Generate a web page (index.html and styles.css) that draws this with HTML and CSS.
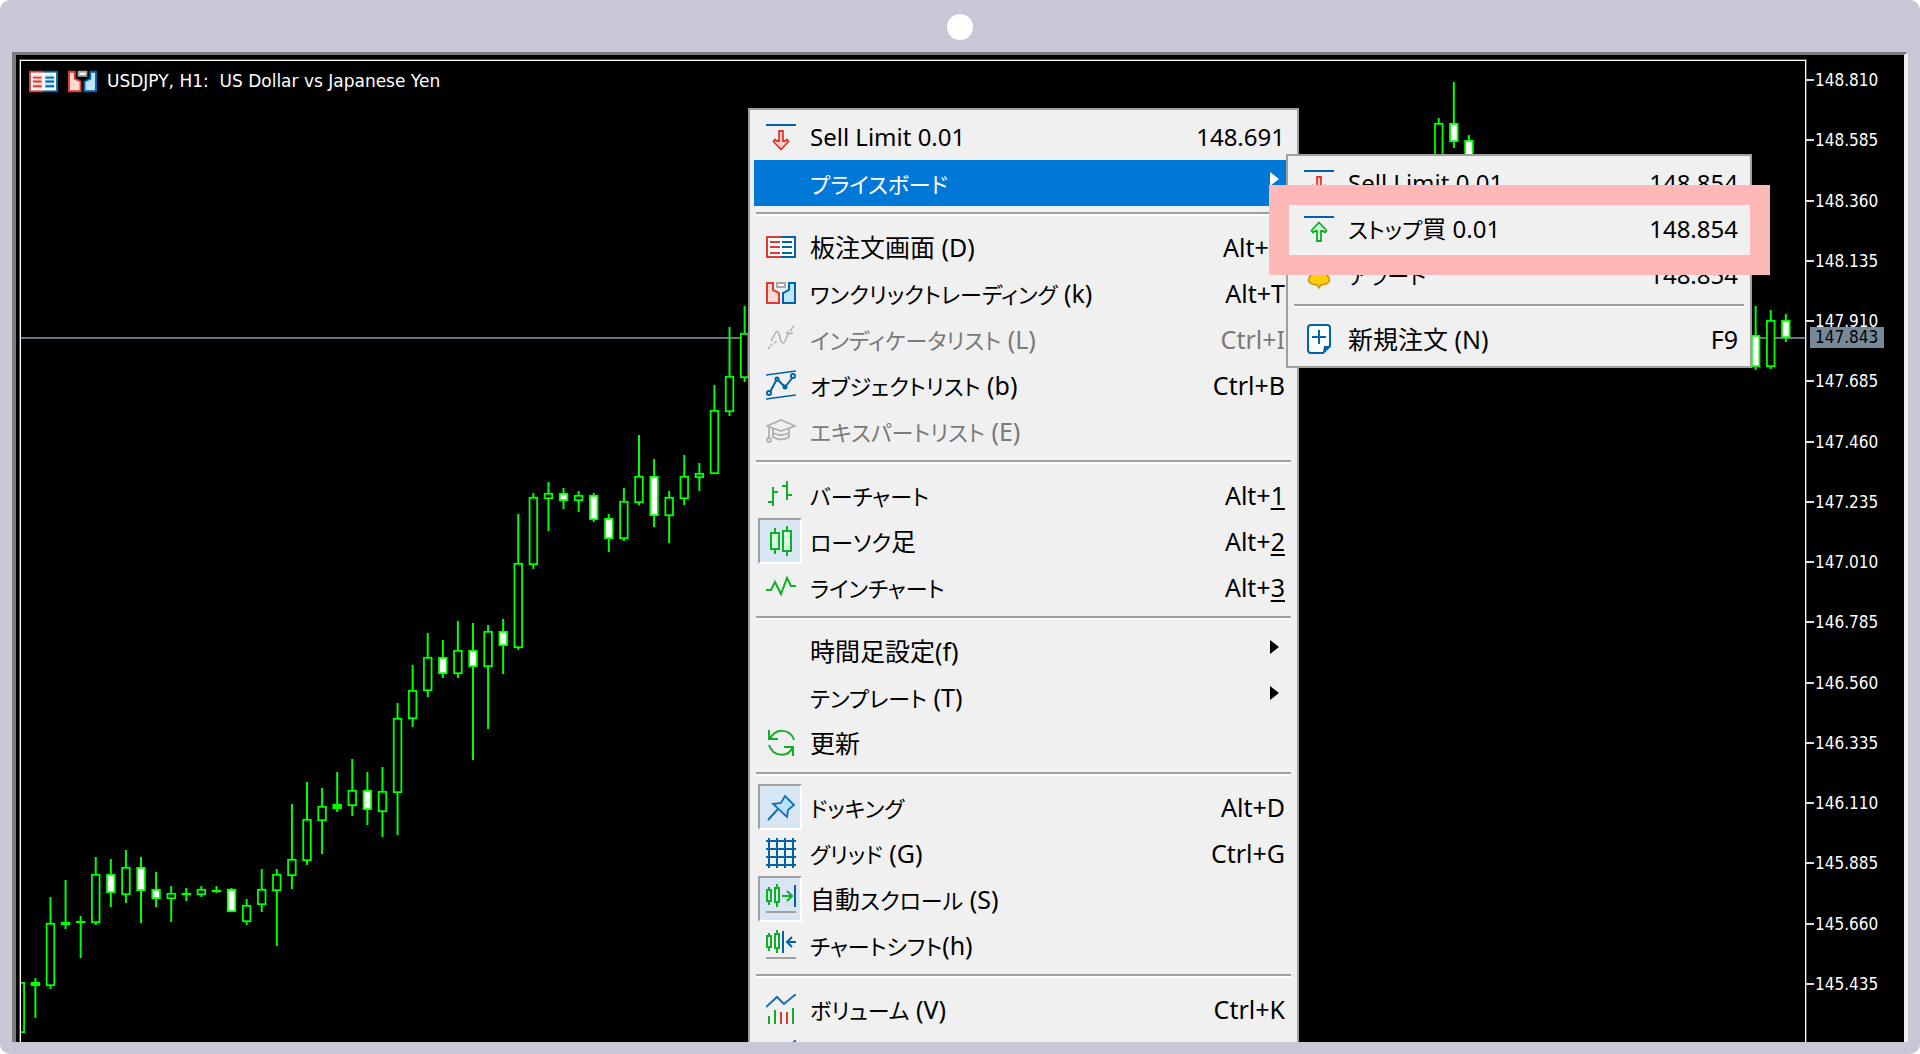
FILE: index.html
```html
<!DOCTYPE html>
<html lang="ja">
<head>
<meta charset="utf-8">
<title>USDJPY, H1</title>
<link rel="stylesheet" href="styles.css">
</head>
<body>
<svg class="sprite" aria-hidden="true">
  <symbol id="sell" viewBox="0 0 30 30"><path d="M0 3h30" stroke="#0062a8" stroke-width="2"/><path d="M13 9h4v10h2l2-1.500 1.500 2L15 27.500 7.500 19.500l1.500-2 2 1.500h2z" fill="#fbd0cb" stroke="#dd3b33" stroke-width="1.800"/></symbol>
  <symbol id="buy" viewBox="0 0 30 30"><path d="M0 3h30" stroke="#0062a8" stroke-width="2"/><path d="M13 27h4V17h2l2 1.500 1.500-2L15 8.500 7.500 16.500l1.500 2L11 17h2z" fill="#d5f7d8" stroke="#0faf28" stroke-width="1.800"/></symbol>
  <symbol id="book" viewBox="0 0 30 30"><path d="M15 5H1v20h14" fill="#fff" stroke="#dd3b33" stroke-width="2"/><path d="M15 5h14v20H15" fill="#fff" stroke="#0062a8" stroke-width="2"/><path d="M4 10h10M4 15h10M4 21h10" stroke="#dd3b33" stroke-width="2"/><path d="M16 10h10M16 15h10M16 21h10" stroke="#0062a8" stroke-width="2"/></symbol>
  <symbol id="book-dark" viewBox="0 0 30 30"><path d="M15 5H1v20h14" fill="#ffd9d3" stroke="#dd3b33" stroke-width="2"/><path d="M15 5h14v20H15" fill="#bfe5ff" stroke="#0062a8" stroke-width="2"/><path d="M15 7v16M3 7h24v16H3z" fill="none" stroke="#fff" stroke-width="2"/><path d="M4 11h9M4 15h9M4 20h9" stroke="#dd3b33" stroke-width="2"/><path d="M17 11h9M17 15h9M17 20h9" stroke="#0062a8" stroke-width="2"/></symbol>
  <symbol id="oneclick" viewBox="0 0 30 30"><path d="M1 5h6v7l6 3v10H1z" fill="#ffd9d3" stroke="#dd3b33" stroke-width="2"/><path d="M29 5h-6v7l-6 3v10h12z" fill="#bfe5ff" stroke="#0062a8" stroke-width="2"/><path d="M11 5h8v4h-8z" fill="#fff" stroke="#a8a8a8" stroke-width="2"/></symbol>
  <symbol id="indicator" viewBox="0 0 30 30"><g fill="none" stroke="#b0b0b0" stroke-width="1.500"><path d="M5 17l5-9q2-1 3 2l2 7q2 4 4 0l3-7 5-1"/><path d="M2 25l4-5M8 19l3-2M20 9l3-1M24 7l4-5" stroke-dasharray="3 1"/></g></symbol>
  <symbol id="objects" viewBox="0 0 30 30"><g fill="none" stroke="#0062a8" stroke-width="2"><path d="M0 5l30-4M0 29l30-4" stroke-width="1.500"/><path d="M4 22l7-13 8 8 8-10"/><circle cx="3" cy="23" r="2" fill="#fff"/><circle cx="11" cy="9" r="1.500" fill="#fff"/><circle cx="19" cy="17" r="1.500"/><circle cx="27" cy="6" r="2" fill="#fff"/></g></symbol>
  <symbol id="expert" viewBox="0 0 30 30"><g fill="none" stroke="#b0b0b0" stroke-width="1.800"><path d="M1 10l14-6 14 6-14 5zM7 12v9q8 5 16 0v-9M3 11v11M7 17q8 4 16 0"/><circle cx="3" cy="24" r="2"/></g></symbol>
  <symbol id="bars" viewBox="0 0 30 30"><path d="M7 7v19M2 22h5M7 12h5M21 1v19M16 6h5M21 15h5" fill="none" stroke="#0faf28" stroke-width="2"/></symbol>
  <symbol id="candles" viewBox="0 0 30 30"><g fill="#d5ffe0" stroke="#0faf28" stroke-width="2"><path d="M9 2v26M21 0v30" /><path d="M5 7h8v16H5zM17 5h8v20h-8z"/></g></symbol>
  <symbol id="line" viewBox="0 0 30 30"><path d="M0 18h5l4-8 6 12 6-16 4 8h5" fill="none" stroke="#0faf28" stroke-width="2"/></symbol>
  <symbol id="refresh" viewBox="0 0 30 30"><g fill="none" stroke="#0faf28" stroke-width="2"><path d="M28 12C24 0 9 0 4 11M3 2v9h9M3 17c4 12 19 13 24 2M27 28v-9h-9"/></g></symbol>
  <symbol id="pin" viewBox="0 0 30 30"><path d="M2 28l10-11" stroke="#1670ae" stroke-width="2"/><path d="M7 12l8-1 4-7 9 9-6 5-1 7z" fill="#b9e2ff" stroke="#1670ae" stroke-width="1.800"/></symbol>
  <symbol id="grid" viewBox="0 0 30 30"><path d="M3 0v30M11 0v30M19 0v30M27 0v30M0 3h30M0 11h30M0 19h30M0 27h30" stroke="#0062a8" stroke-width="2"/></symbol>
  <symbol id="scroll" viewBox="0 0 30 30"><g fill="none" stroke-width="2"><path d="M3 3v3M3 17v4M11 0v4M11 18v5M1 6h4v11H1zM9 4h4v14H9zM16 12h10M21 7l5 5-5 5" stroke="#0faf28"/><path d="M29 1v22" stroke="#0062a8"/><path d="M0 28h30" stroke="#a0a0a0"/></g></symbol>
  <symbol id="shift" viewBox="0 0 30 30"><g fill="none" stroke-width="2"><path d="M3 3v3M3 17v4M11 0v4M11 18v5M1 6h4v11H1zM9 4h4v14H9z" stroke="#0faf28"/><path d="M17 1v22M30 12h-9M26 7l-5 5 5 5" stroke="#0062a8"/><path d="M0 28h30" stroke="#a0a0a0"/></g></symbol>
  <symbol id="volume" viewBox="0 0 30 30"><path d="M0 13L11 3l7 7L30 0" fill="none" stroke="#1670ae" stroke-width="2"/><path d="M3 22v8M9 16v14M27 14v16" stroke="#0faf28" stroke-width="2"/><path d="M15 18v12M21 18v12" stroke="#dd3b33" stroke-width="2"/></symbol>
  <symbol id="tick" viewBox="0 0 30 30"><path d="M0 14L11 6l7 6L30 0" fill="none" stroke="#1670ae" stroke-width="2"/></symbol>
  <symbol id="bell" viewBox="0 0 30 30"><path d="M5 18q3-3 3-8 1-6 7-6t7 6q0 5 3 8 2 4-3 6l-5 1-2 3-2-3-5-1q-5-2-3-6z" fill="#fccf0a" stroke="#cf8f10" stroke-width="1.500"/></symbol>
  <symbol id="order" viewBox="0 0 30 30"><path d="M7 1h16q3 0 3 3v18l-7 7H7q-3 0-3-3V4q0-3 3-3z" fill="#fff" stroke="#0062a8" stroke-width="2"/><path d="M26 22h-6l-1 7z" fill="#0062a8"/><path d="M15 6v14M8 13h14" stroke="#0062a8" stroke-width="2"/></symbol>
</svg>

<div class="device">
  <span class="camera"></span>
  <main class="screen">
    <section class="plot">
      <svg class="candles" id="chart" role="img" aria-label="USDJPY H1"></svg>
      <header class="caption">
        <svg class="icon"><use href="#book-dark"/></svg>
        <svg class="icon"><use href="#oneclick"/></svg>
        <span>USDJPY, H1:&nbsp; US Dollar vs Japanese Yen</span>
      </header>
    </section>
    <aside class="axis">
      <span>148.810</span><span>148.585</span><span>148.360</span><span>148.135</span>
      <span>147.910</span><span>147.685</span><span>147.460</span><span>147.235</span>
      <span>147.010</span><span>146.785</span><span>146.560</span><span>146.335</span>
      <span>146.110</span><span>145.885</span><span>145.660</span><span>145.435</span>
      <b class="price">147.843</b>
    </aside>

    <nav class="menu menu-main">
      <button class="item quote"><i class="mark"><svg class="icon"><use href="#sell"/></svg></i><span class="label">Sell Limit 0.01</span><span class="key">148.691</span></button>
      <button class="item active"><i class="mark"></i><span class="label"><span class="kana">プライスボード</span></span><i class="arrow"></i></button>
      <hr>
      <button class="item"><i class="mark"><svg class="icon"><use href="#book"/></svg></i><span class="label">板注文画面 (D)</span><span class="key">Alt+B</span></button>
      <button class="item"><i class="mark"><svg class="icon"><use href="#oneclick"/></svg></i><span class="label"><span class="kana">ワンクリックトレーディング</span> (k)</span><span class="key">Alt+T</span></button>
      <button class="item" disabled><i class="mark"><svg class="icon"><use href="#indicator"/></svg></i><span class="label"><span class="kana">インディケータリスト</span> (L)</span><span class="key">Ctrl+I</span></button>
      <button class="item"><i class="mark"><svg class="icon"><use href="#objects"/></svg></i><span class="label"><span class="kana">オブジェクトリスト</span> (b)</span><span class="key">Ctrl+B</span></button>
      <button class="item" disabled><i class="mark"><svg class="icon"><use href="#expert"/></svg></i><span class="label"><span class="kana">エキスパートリスト</span> (E)</span></button>
      <hr>
      <button class="item"><i class="mark"><svg class="icon"><use href="#bars"/></svg></i><span class="label"><span class="kana">バーチャート</span></span><span class="key">Alt+<u>1</u></span></button>
      <button class="item"><i class="mark checked"><svg class="icon"><use href="#candles"/></svg></i><span class="label"><span class="kana">ローソク</span>足</span><span class="key">Alt+<u>2</u></span></button>
      <button class="item"><i class="mark"><svg class="icon"><use href="#line"/></svg></i><span class="label"><span class="kana">ラインチャート</span></span><span class="key">Alt+<u>3</u></span></button>
      <hr>
      <button class="item"><i class="mark"></i><span class="label">時間足設定(f)</span><i class="arrow"></i></button>
      <button class="item"><i class="mark"></i><span class="label"><span class="kana">テンプレート</span> (T)</span><i class="arrow"></i></button>
      <button class="item"><i class="mark"><svg class="icon"><use href="#refresh"/></svg></i><span class="label">更新</span></button>
      <hr>
      <button class="item"><i class="mark checked"><svg class="icon"><use href="#pin"/></svg></i><span class="label"><span class="kana">ドッキング</span></span><span class="key">Alt+D</span></button>
      <button class="item"><i class="mark"><svg class="icon"><use href="#grid"/></svg></i><span class="label"><span class="kana">グリッド</span> (G)</span><span class="key">Ctrl+G</span></button>
      <button class="item"><i class="mark checked"><svg class="icon"><use href="#scroll"/></svg></i><span class="label">自動<span class="kana">スクロール</span> (S)</span></button>
      <button class="item"><i class="mark"><svg class="icon"><use href="#shift"/></svg></i><span class="label"><span class="kana">チャートシフト</span>(h)</span></button>
      <hr>
      <button class="item"><i class="mark"><svg class="icon"><use href="#volume"/></svg></i><span class="label"><span class="kana">ボリューム</span> (V)</span><span class="key">Ctrl+K</span></button>
      <button class="item"><i class="mark"><svg class="icon"><use href="#tick"/></svg></i></button>
    </nav>

    <nav class="menu menu-sub">
      <button class="item quote"><i class="mark"><svg class="icon"><use href="#sell"/></svg></i><span class="label">Sell Limit 0.01</span><span class="key">148.854</span></button>
      <button class="item quote"><i class="mark"><svg class="icon"><use href="#buy"/></svg></i><span class="label"><span class="kana">ストップ</span>買 0.01</span><span class="key">148.854</span></button>
      <button class="item quote"><i class="mark"><svg class="icon"><use href="#bell"/></svg></i><span class="label"><span class="kana">アラート</span></span><span class="key">148.854</span></button>
      <hr>
      <button class="item"><i class="mark"><svg class="icon"><use href="#order"/></svg></i><span class="label">新規注文 (N)</span><span class="key">F9</span></button>
    </nav>

    <div class="focus-frame"></div>
  </main>
</div>
<script src="chart.js"></script>
</body>
</html>
```
FILE: styles.css
```css
* { box-sizing: border-box; }

body {
  margin: 0;
  background: #fff;
  font-family: "Noto Sans", "Noto Sans CJK JP", sans-serif;
}

.sprite { display: none; }

.device {
  display: flex;
  flex-direction: column;
  align-items: center;
  height: 100vh;
  padding: 14px 12px 12px;
  border-radius: 10px;
  background: #c8c7d5;
}

.camera {
  flex: none;
  width: 26px;
  height: 26px;
  margin-bottom: 12px;
  border-radius: 50%;
  background: #fff;
}

.screen {
  position: relative;
  display: flex;
  flex: 1;
  align-self: stretch;
  min-height: 0;
  overflow: hidden;
  background: #000;
  border: 4px solid #eee;
  border-top: 3px solid #7c7c7c;
  border-left-color: #7c7c7c;
  border-bottom: 0;
}

/* chart area */
.plot {
  position: relative;
  flex: 1;
  margin: 5px 0 0 4px;
  border: 1px solid #fff;
  border-bottom: 0;
  outline: 1px solid #555;
}

.candles {
  position: absolute;
  inset: 0;
  width: 100%;
  height: 100%;
}

.caption {
  position: relative;
  display: flex;
  align-items: center;
  gap: 10px;
  padding: 5px 8px;
  color: #fff;
  font: 17px/30px "DejaVu Sans", sans-serif;
}

.icon {
  display: block;
  flex: none;
  width: 30px;
  height: 30px;
}

.caption .icon { width: 29px; height: 29px; }

/* price scale */
.axis {
  position: relative;
  display: flex;
  flex-direction: column;
  justify-content: space-between;
  width: 98px;
  padding: 15px 0 48px;
  color: #fff;
  font: 17px/20px "DejaVu Sans Condensed", "DejaVu Sans", sans-serif;
}

.axis span {
  display: flex;
  align-items: center;
  gap: 1px;
}

.axis span::before {
  content: "";
  width: 8px;
  height: 2px;
  background: #ddd;
}

.price {
  position: absolute;
  top: 272px;
  left: 4px;
  width: 74px;
  padding-left: 5px;
  background: #778899;
  color: #000;
  font-weight: 400;
  line-height: 21px;
}

/* context menus */
.menu {
  position: absolute;
  padding: 4px;
  background: #f0f0f0;
  border: 2px solid #a0a0a0;
}

.menu-main { left: 732px; top: 53px; width: 551px; }
.menu-sub { left: 1270px; top: 99px; width: 466px; }

.item {
  display: flex;
  align-items: center;
  width: 100%;
  height: 46px;
  padding: 0 8px 0 4px;
  border: 0;
  background: none;
  color: #000;
  font: inherit;
  font-size: 25px;
  line-height: 48px;
  text-align: left;
}

.item.quote { font-size: 24px; }

.item:disabled { color: #7a7a7a; }

.item.active {
  background: #0078d7;
  color: #fff;
}

.mark {
  display: grid;
  place-items: center;
  flex: none;
  width: 44px;
  height: 46px;
  padding-left: 2px;
  border: 2px solid transparent;
}

.mark.checked {
  background: #d8e5f2;
  border-color: #a0a0a0 #fff #fff #a0a0a0;
}

.label {
  flex: 1;
  padding-left: 8px;
  white-space: nowrap;
}

.kana {
  font-size: 22px;
  font-feature-settings: "palt";
}

.key u { text-underline-offset: 3px; text-decoration-thickness: 2px; }

.arrow {
  margin: 0 6px 8px 0;
  border: 7px solid transparent;
  border-left: 9px solid currentColor;
  border-right: 0;
}

.menu hr {
  height: 4px;
  margin: 6px 2px 8px;
  border: 0;
  border-top: 2px solid #a0a0a0;
  background: #fff;
}

.focus-frame {
  position: absolute;
  left: 1253px;
  top: 130px;
  width: 501px;
  height: 90px;
  border: 20px solid #ffb8b8;
  pointer-events: none;
}
```
FILE: chart.js
```js
// slot, high, body top, body bottom, low, kind (u = hollow, d = white, f = flat)
const bars = [
  [0,982,982,1033,1033,"u"],[1,978,982,986,1018,"f"],[2,897,923,986,989,"u"],[3,880,922,925,929,"f"],
  [4,916,921,923,958,"f"],[5,857,874,923,925,"u"],[6,859,874,893,907,"d"],[7,850,867,895,903,"u"],
  [8,857,867,891,923,"d"],[9,872,889,899,907,"d"],[10,886,893,899,922,"u"],[11,888,893,895,901,"f"],
  [12,886,889,895,897,"u"],[13,886,890,892,893,"f"],[14,888,889,912,912,"d"],[15,899,905,922,925,"u"],
  [16,869,889,905,912,"u"],[17,869,874,891,946,"u"],[18,804,859,876,889,"u"],[19,782,819,861,865,"u"],
  [20,788,806,821,854,"u"],[21,772,804,809,812,"f"],[22,759,790,806,816,"u"],[23,772,790,810,825,"d"],
  [24,767,791,812,837,"u"],[25,703,718,793,835,"u"],[26,665,690,719,727,"u"],[27,633,657,691,697,"u"],
  [28,640,657,674,678,"d"],[29,621,650,674,678,"u"],[30,623,650,667,760,"d"],[31,625,631,667,729,"u"],
  [32,619,631,646,674,"d"],[33,514,563,648,650,"u"],[34,493,497,565,569,"u"],[35,482,493,499,531,"u"],
  [36,488,493,501,509,"d"],[37,491,495,501,512,"u"],[38,493,495,520,522,"d"],[39,514,518,539,552,"d"],
  [40,488,501,539,541,"u"],[41,435,476,503,505,"u"],[42,459,476,516,527,"d"],[43,491,497,516,543,"u"],
  [44,455,476,499,505,"u"],[45,463,473,478,491,"u"],[46,385,410,474,474,"u"],[47,327,376,412,416,"u"],
  [48,306,333,378,382,"u"],[94,118,123,170,170,"u"],[95,82,123,142,148,"d"],[96,135,140,170,170,"d"],
  [115,306,335,367,370,"d"],[116,310,320,367,369,"u"],[117,314,320,338,342,"d"]
];
const fills = { u: "#000", d: "#fff", f: "#0f0" };
const left = 21, top0 = 61, price = 337;
let out = `<rect x="0" y="${price - top0}" width="100%" height="2" fill="#667582"/>`;
for (const [slot, high, top, bottom, low, kind] of bars) {
  const x = 20.3 + 15.09 * slot - left;
  out += `<path d="M${x} ${high - top0}V${low - top0}" stroke="#0f0" stroke-width="2"/>`;
  out += `<rect x="${x - 3.8}" y="${top - top0 + 0.8}" width="7.600" height="${Math.max(bottom - top - 1.6, 0.4)}" fill="${fills[kind]}" stroke="#0f0" stroke-width="1.800"/>`;
}
document.getElementById("chart").innerHTML = out;
```
